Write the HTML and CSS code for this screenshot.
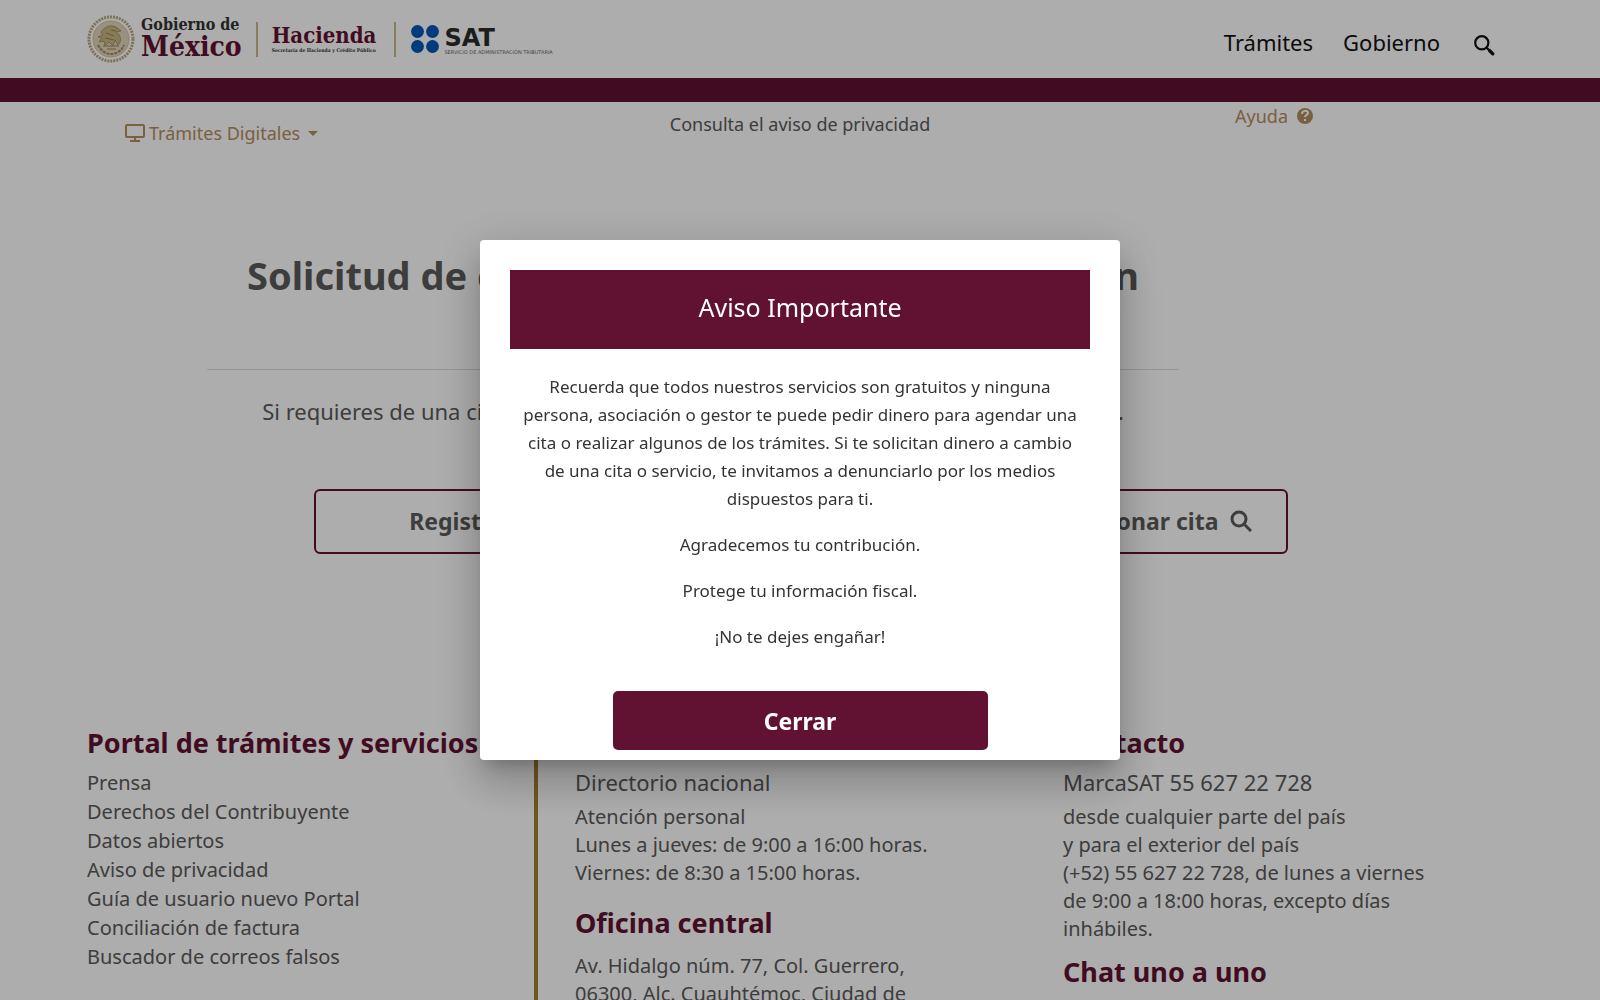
FILE: index.html
```html
<!DOCTYPE html>
<html lang="es">
<head>
    <meta charset="UTF-8">
    <meta name="viewport" content="width=device-width, initial-scale=1.0">
    <title>Citas SAT</title>
    <link rel="stylesheet" href="styles.css">
</head>
<body>
    <div class="wrapper">
        <header class="top">
            <div class="logos">
                <!-- escudo -->
                <svg class="seal" viewBox="0 0 48 48" fill="none">
                    <circle cx="24" cy="24" r="22" stroke="#b9a57c" stroke-width="3" stroke-dasharray="2 1"/>
                    <circle cx="24" cy="24" r="18" fill="#e0d6bb" stroke="#d0c29c"/>
                    <path d="M11 30c3 6 8 9 13 9s11-3 13-9" stroke="#a08a57" stroke-width="2" stroke-dasharray="3 1"/>
                    <path d="M14 17c4-6 11-8 16-4l4 3-5 1c5 3 6 9 2 13l-3-5-2 6-4-4-4 4-1-5-5 1 3-4-4-1 5-2z" fill="#c9b684" stroke="#a89360"/>
                    <path d="M19 18l8 3m-9 2l9 2m-3-10l5 1M16 31h16M20 34h9" stroke="#9a8452"/>
                </svg>
                <div class="brand">
                    <span class="brand-top">Gobierno de</span>
                    <span class="brand-name">México</span>
                </div>
                <span class="sep"></span>
                <div class="hacienda">
                    <span class="hacienda-name">Hacienda</span>
                    <span class="hacienda-sub">Secretaría de Hacienda y Crédito Público</span>
                </div>
                <span class="sep"></span>
                <svg class="dots" viewBox="0 0 28 28" fill="#0057b8">
                    <circle cx="7" cy="7" r="6"/>
                    <circle cx="21" cy="7" r="6"/>
                    <circle cx="7" cy="21" r="6"/>
                    <circle cx="21" cy="21" r="6"/>
                </svg>
                <div class="sat">
                    <span class="sat-name">SAT</span>
                    <span class="sat-sub">SERVICIO DE ADMINISTRACIÓN TRIBUTARIA</span>
                </div>
            </div>
            <nav class="menu">
                <a href="#">Trámites</a>
                <a href="#">Gobierno</a>
                <a href="#" aria-label="Buscar">
                    <svg class="lupa" viewBox="0 0 20 20" fill="none" stroke="currentColor">
                        <circle cx="8" cy="8" r="6" stroke-width="2"/>
                        <path d="M12 12l2 2" stroke-width="2"/>
                        <path d="M15 15l3 3" stroke-width="3" stroke-linecap="round"/>
                    </svg>
                </a>
            </nav>
        </header>
        <div class="bar"></div>
        <div class="subnav">
            <button class="digital" type="button">
                <svg class="monitor" viewBox="0 0 20 18" fill="none" stroke="currentColor" stroke-width="2">
                    <rect x="1" y="1" width="18" height="12" rx="1"/>
                    <path d="M10 13v3M5 17h10"/>
                </svg>
                Trámites Digitales
                <span class="caret"></span>
            </button>
            <a href="#" class="privacy">Consulta el aviso de privacidad</a>
            <a href="#" class="help">Ayuda
                <svg class="question" viewBox="0 0 16 16">
                    <circle cx="8" cy="8" r="8" fill="currentColor"/>
                    <path d="M5 6c0-4 6-4 6-1 0 2-3 2-3 4" fill="none" stroke="#fff" stroke-width="2"/>
                    <rect x="7" y="11" width="2" height="2" fill="#fff"/>
                </svg>
            </a>
        </div>
        <main>
            <h1>Solicitud de cita para Trámites de la Inscripción</h1>
            <p class="intro">Si requieres de una cita para realizar un trámite o servicio, ve a una de las opciones.</p>
            <div class="actions">
                <button type="button">Registrar citas
                    <svg class="icon" viewBox="0 0 22 22" fill="none" stroke="currentColor" stroke-width="3">
                        <path d="M2 4h18v16H2zM2 9h18M7 1v4M15 1v4"/>
                    </svg>
                </button>
                <button type="button">Cancelar o gestionar cita
                    <svg class="icon" viewBox="0 0 22 22" fill="none" stroke="currentColor" stroke-width="3">
                        <circle cx="9" cy="9" r="7"/>
                        <path d="M14 14l7 7"/>
                    </svg>
                </button>
            </div>
        </main>
        <footer>
            <section class="portal">
                <h2>Portal de trámites y servicios</h2>
                <ul>
                    <li><a href="#">Prensa</a></li>
                    <li><a href="#">Derechos del Contribuyente</a></li>
                    <li><a href="#">Datos abiertos</a></li>
                    <li><a href="#">Aviso de privacidad</a></li>
                    <li><a href="#">Guía de usuario nuevo Portal</a></li>
                    <li><a href="#">Conciliación de factura</a></li>
                    <li><a href="#">Buscador de correos falsos</a></li>
                </ul>
            </section>
            <section>
                <h2>Directorio</h2>
                <p class="lead">Directorio nacional</p>
                <p>Atención personal<br>Lunes a jueves: de 9:00 a 16:00 horas.<br>Viernes: de 8:30 a 15:00 horas.</p>
                <h2 class="office">Oficina central</h2>
                <p>Av. Hidalgo núm. 77, Col. Guerrero,<br>06300, Alc. Cuauhtémoc, Ciudad de<br>México</p>
            </section>
            <section>
                <h2>Contacto</h2>
                <p class="lead">MarcaSAT 55 627 22 728</p>
                <p>desde cualquier parte del país<br>y para el exterior del país<br>(+52) 55 627 22 728, de lunes a viernes<br>de 9:00 a 18:00 horas, excepto días<br>inhábiles.</p>
                <h2 class="chat">Chat uno a uno</h2>
            </section>
        </footer>
    </div>

    <!-- aviso -->
    <div class="overlay">
        <div class="modal" role="dialog" aria-modal="true" aria-labelledby="aviso">
            <h2 id="aviso">Aviso Importante</h2>
            <p>Recuerda que todos nuestros servicios son gratuitos y ninguna persona, asociación o gestor te puede pedir dinero para agendar una cita o realizar algunos de los trámites. Si te solicitan dinero a cambio de una cita o servicio, te invitamos a denunciarlo por los medios dispuestos para ti.</p>
            <p>Agradecemos tu contribución.</p>
            <p>Protege tu información fiscal.</p>
            <p>¡No te dejes engañar!</p>
            <button type="button">Cerrar</button>
        </div>
    </div>
</body>
</html>
```
FILE: styles.css
```css
*{box-sizing: border-box;}
ul{list-style: none; margin: 0; padding: 0;}
a{text-decoration: none; color: inherit;}
h1, h2, p{margin: 0;}
button{font: inherit; color: inherit; cursor: pointer;}
svg{display: block; flex: none;}
body{
    margin: 0;
    font-family: "Noto Sans", sans-serif;
    font-size: 20px;
    color: #5a5a5a;
    background-color: #fff;
    /* sin scroll mientras el aviso está abierto */
    overflow: hidden;
}
.wrapper{
    height: 100vh;
    overflow: hidden;
}

/* encabezado */
.top{
    display: flex;
    justify-content: space-between;
    align-items: center;
    height: 78px;
    padding: 0 105px 0 87px;
}
.logos{
    display: flex;
    align-items: center;
}
.seal{
    width: 48px;
    height: 48px;
    margin-right: 6px;
}
.brand, .hacienda, .sat{
    display: flex;
    flex-direction: column;
    white-space: nowrap;
}
.brand, .hacienda{font-family: "DejaVu Serif Condensed", "DejaVu Serif", serif;}
.brand-top{
    font-size: 16px;
    line-height: 16px;
    font-weight: bold;
    color: #333;
}
.brand-name{
    font-size: 28px;
    line-height: 28px;
    font-weight: bold;
    color: #611232;
}
.sep{
    width: 2px;
    height: 35px;
    margin: 0 14px;
    background-color: #c9b98c;
}
.hacienda{margin-right: 4px;}
.hacienda-name{
    font-size: 22px;
    line-height: 22px;
    font-weight: bold;
    color: #611232;
}
.hacienda-sub{
    font-size: 5px;
    line-height: 8px;
    font-weight: bold;
    color: #333;
}
.dots{
    width: 30px;
    height: 30px;
    margin-right: 4px;
}
.sat{
    font-family: "DejaVu Sans", sans-serif;
    padding-top: 4px;
}
.sat-name{
    font-size: 24px;
    line-height: 22px;
    font-weight: bold;
    color: #2b2b2b;
}
.sat-sub{
    font-size: 5px;
    line-height: 6px;
    color: #666;
}
.menu{
    display: flex;
    align-items: center;
    gap: 30px;
    padding-top: 6px;
    font-size: 22px;
    color: #111;
}
.lupa{
    width: 22px;
    height: 22px;
    margin: 6px 0 0 3px;
}
.bar{
    height: 24px;
    background-color: #611232;
}

/* barra secundaria */
.subnav{
    display: grid;
    grid-template-columns: 1fr auto 1fr;
    align-items: start;
    height: 94px;
    padding: 0 125px;
    font-size: 18px;
    line-height: 24px;
}
.digital{
    display: flex;
    align-items: center;
    justify-self: start;
    gap: 4px;
    margin-top: 19px;
    padding: 0;
    border: 0;
    background: none;
    color: #b38e5d;
}
.monitor{
    width: 20px;
    height: 18px;
}
.caret{
    margin-left: 4px;
    border: 5px solid transparent;
    border-top-color: currentColor;
    border-bottom: 0;
}
.privacy{margin-top: 10px;}
.help{
    display: flex;
    align-items: center;
    justify-self: end;
    gap: 9px;
    margin: 2px 162px 0 0;
    color: #b38e5d;
}
.question{
    width: 16px;
    height: 16px;
}

/* contenido */
main{
    width: 972px;
    margin: 0 auto;
    position: relative;
    left: -107px;
    height: 529px;
    padding-top: 51px;
    text-align: center;
}
main>h1{
    font-size: 38px;
    line-height: 56px;
    padding-bottom: 66px;
    border-bottom: 1px solid #ddd;
    white-space: nowrap;
}
main>.intro{
    margin-top: 25px;
    font-size: 22px;
    line-height: 32px;
    white-space: nowrap;
}
.actions{
    display: flex;
    justify-content: space-between;
    margin: 62px -109px 0 107px;
}
.actions>button{
    display: flex;
    align-items: center;
    justify-content: center;
    gap: 12px;
    width: 390px;
    height: 65px;
    padding-bottom: 3px;
    border: 2px solid #611232;
    border-radius: 6px;
    background-color: transparent;
    font-size: 23px;
    font-weight: bold;
}
.icon{
    width: 22px;
    height: 22px;
}

/* pie de página */
footer{
    display: grid;
    grid-template-columns: repeat(3, 1fr);
    padding: 0 49px 0 87px;
    line-height: 28px;
}
footer h2{
    margin-bottom: 7px;
    font-size: 27px;
    line-height: 36px;
    color: #611232;
    white-space: nowrap;
}
.portal{
    margin-right: 37px;
    border-right: 4px solid #a57f2c;
}
.portal li{line-height: 29px;}
.lead{
    margin-bottom: 7px;
    font-size: 22px;
}
footer .office{margin: 18px 0 11px;}
footer .chat{margin-top: 11px;}

/* ventana de aviso */
.overlay{
    display: flex;
    align-items: center;
    justify-content: center;
    position: fixed;
    inset: 0;
    background-color: rgba(0, 0, 0, .32);
}
.modal{
    width: 640px;
    padding: 30px 30px 10px;
    border-radius: 4px;
    background-color: #fff;
    color: #333;
    text-align: center;
    box-shadow: 0 11px 15px -7px rgba(0, 0, 0, .2), 0 24px 38px 3px rgba(0, 0, 0, .14), 0 9px 46px 8px rgba(0, 0, 0, .12);
}
.modal>h2{
    margin-bottom: 24px;
    padding: 18px 0 22px;
    font-size: 25px;
    line-height: 39px;
    font-weight: normal;
    color: #fff;
    background-color: #611232;
}
.modal>p{
    margin-bottom: 18px;
    padding: 0 8px;
    font-size: 17px;
    line-height: 28px;
}
.modal>button{
    display: block;
    width: 375px;
    height: 59px;
    margin: 40px auto 0;
    border: 0;
    border-radius: 5px;
    background-color: #611232;
    font-size: 23px;
    font-weight: bold;
    color: #fff;
}
```
